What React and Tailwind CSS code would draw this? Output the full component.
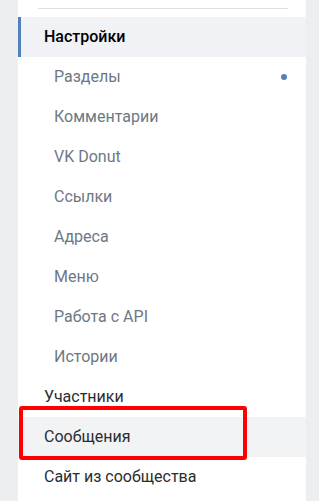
import React from 'react';

const subItems = ['Разделы', 'Комментарии', 'VK Donut', 'Ссылки', 'Адреса', 'Меню', 'Работа с API', 'Истории'];

const App = () => {
  return (
    <div
      className="w-[319px] h-[501px] overflow-hidden bg-[#edeef0] flex"
      style={{ fontFamily: 'Roboto, "Noto Sans", sans-serif' }}
    >
      <div className="w-[18px] shrink-0" />
      <div className="w-[288px] bg-white flex flex-col pt-[8px]">
        <div className="ml-[20px] mr-[18px] h-px bg-[#dce1e6]" />
        <div className="h-[8px]" />

        <div className="h-[40px] flex items-center bg-[#f0f2f5] border-l-[3px] border-[#5181b8] pl-[23px] text-[16px] font-medium text-black">
          Настройки
        </div>

        {subItems.map((item, i) => (
          <div key={item} className="h-[40px] flex items-center justify-between pl-[36px] pr-[19px] text-[16px] text-[#6d7885]">
            <span>{item}</span>
            {i === 0 && <span className="w-[6px] h-[6px] rounded-full bg-[#5181b8]" />}
          </div>
        ))}

        <div className="h-[40px] flex items-center pl-[26px] text-[16px] text-[#2c2d2e]">Участники</div>

        <div className="relative h-[40px] flex items-center bg-[#f2f3f5] pl-[26px] text-[16px] text-[#2c2d2e]">
          Сообщения
          <div className="absolute left-[1px] top-[-11px] w-[228px] h-[54px] border-[4px] border-[#ff0000] rounded-[3px]" />
        </div>

        <div className="h-[40px] flex items-center pl-[26px] text-[16px] text-[#2c2d2e]">Сайт из сообщества</div>
      </div>
      <div className="flex-1" />
    </div>
  );
};

export default App;
